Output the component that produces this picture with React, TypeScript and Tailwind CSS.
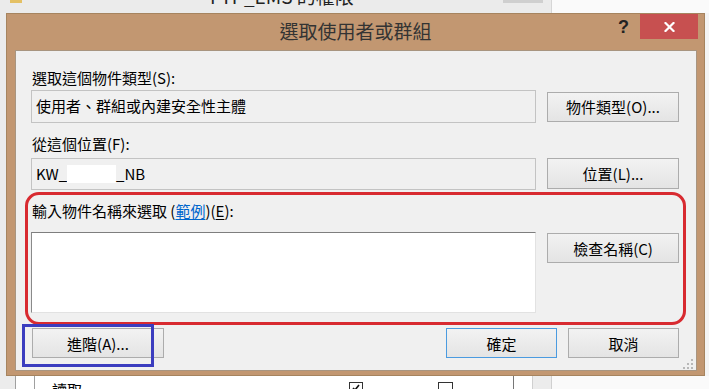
import React from "react";

const Btn = ({ children, w, h = "h-[30px]", extra = "" }: { children: React.ReactNode; w: string; h?: string; extra?: string }) => (
  <div
    className={`${w} ${h} ${extra} shrink-0 flex items-center justify-center border bg-linear-to-b from-[#f2f2f2] to-[#e4e4e4] text-[15px] text-black leading-none`}
  >
    {children}
  </div>
);

export default function App() {
  return (
    <div className="w-[709px] h-[389px] overflow-hidden relative flex flex-col bg-[#ebebeb] font-['Noto_Sans_CJK_TC','Noto_Sans',sans-serif]">
      {/* background window top strip */}
      <div className="h-[13px] shrink-0 flex overflow-hidden">
        <div className="w-[552px] flex items-start bg-[#ebebeb] border-r border-[#d6d6d6]">
          <div className="ml-[10px] w-[12px] h-[3px] bg-[#e4c064]" />
          <div className="ml-[188px] mt-[-14px] text-[19px] leading-[19px] text-[#222] whitespace-nowrap">FTP_EMS 的權限</div>
          <div className="ml-auto mr-[8px] w-[40px] h-[3px] bg-[#cfcfcf]" />
        </div>
        <div className="flex-1 bg-[#fafafa]" />
      </div>

      {/* middle row */}
      <div className="h-[363px] shrink-0 flex">
        <div className="w-[6px] bg-[#ebebeb]" />
        <div className="w-[699px] h-[363px] flex flex-col border border-[#a6845f] bg-[#c29771]">
          {/* title bar */}
          <div className="h-[36px] shrink-0 flex">
            <div className="w-[86px]" />
            <div className="flex-1 text-center text-[19px] leading-[22px] pt-[6px] text-[#333]">選取使用者或群組</div>
            <div className="w-[86px] flex items-start">
              <div className="w-[10px] mt-[4px] text-[18px] leading-[18px] font-bold text-[#222] font-['Liberation_Sans',sans-serif]">?</div>
              <div className="ml-[12px] w-[58px] h-[25px] bg-[#c75050] flex items-center justify-center">
                <svg width="11" height="10" viewBox="0 0 11 10">
                  <path d="M1.5 1 L9.5 9 M9.5 1 L1.5 9" stroke="#fff" strokeWidth="2.2" strokeLinecap="square" />
                </svg>
              </div>
            </div>
          </div>

          {/* content */}
          <div className="flex-1 ml-[8px] mr-[7px] mb-[4px] relative flex flex-col bg-[#f0f0f0] border border-[#a89580] pl-[15px] pr-[17px] text-black">
            <div className="mt-[18px] ml-[1px] h-[18px] text-[15px] leading-[18px]">選取這個物件類型(S):</div>
            <div className="mt-[3px] flex items-center gap-[11px]">
              <div className="w-[505px] h-[33px] border border-[#c3c3c3] bg-[#f0f0f0] flex items-center pl-[4px] text-[15px]">使用者、群組或內建安全性主體</div>
              <Btn w="w-[132px]" extra="border-[#acacac]">物件類型(O)...</Btn>
            </div>

            <div className="mt-[12px] ml-[1px] h-[18px] text-[15px] leading-[18px]">從這個位置(F):</div>
            <div className="mt-[5px] flex items-start gap-[11px]">
              <div className="w-[505px] h-[32px] border border-[#c3c3c3] bg-[#f0f0f0] flex items-center pl-[4px] text-[15px]">
                <span>KW_</span>
                <span className="inline-block w-[49px] h-[18px] bg-white" />
                <span>_NB</span>
              </div>
              <Btn w="w-[132px]" h="h-[31px]" extra="border-[#acacac]">位置(L)...</Btn>
            </div>

            <div className="mt-[12px] ml-[1px] h-[18px] text-[15px] leading-[18px]">
              輸入物件名稱來選取 (<span className="text-[#0066cc] underline underline-offset-2">範例</span>)(<span className="underline underline-offset-2">E</span>):
            </div>
            <div className="mt-[12px] flex items-start gap-[11px]">
              <div className="w-[505px] h-[81px] bg-white border border-t-[#7e7e7e] border-l-[#8a8a8a] border-r-[#e2e2e2] border-b-[#e2e2e2]" />
              <Btn w="w-[132px]" extra="mt-[1px] border-[#acacac]">檢查名稱(C)</Btn>
            </div>

            <div className="mt-[15px] flex">
              <Btn w="w-[132px]" extra="ml-[1px] border-[#acacac]">進階(A)...</Btn>
              <Btn w="w-[111px]" extra="ml-auto border-[#4b9be0]">確定</Btn>
              <Btn w="w-[111px]" extra="ml-[11px] border-[#acacac]">取消</Btn>
            </div>

            {/* size grip */}
            <svg className="absolute right-[3px] bottom-[1px]" width="10" height="10" viewBox="0 0 10 10">
              <rect x="8" y="0" width="2" height="2" fill="#b8b8b8" />
              <rect x="4" y="4" width="2" height="2" fill="#b8b8b8" />
              <rect x="8" y="4" width="2" height="2" fill="#b8b8b8" />
              <rect x="0" y="8" width="2" height="2" fill="#b8b8b8" />
              <rect x="4" y="8" width="2" height="2" fill="#b8b8b8" />
              <rect x="8" y="8" width="2" height="2" fill="#b8b8b8" />
            </svg>
          </div>
        </div>
        <div className="w-[4px] bg-[#f4f4f4]" />
      </div>

      {/* background window bottom strip */}
      <div className="h-[13px] shrink-0 flex overflow-hidden">
        <div className="w-[15px] bg-[#ececec]" />
        <div className="w-[20px] bg-white border-l border-r border-[#a0a0a0]" />
        <div className="w-[478px] bg-white flex items-start">
          <div className="ml-[17px] mt-[5px] text-[15px] leading-[18px] text-black">讀取</div>
          <div className="ml-[267px] mt-[6px] w-[14px] h-[14px] border border-[#333] bg-white flex items-start justify-center">
            <svg width="10" height="10" viewBox="0 0 10 10"><path d="M2 5 L4 7 L8 2" stroke="#111" strokeWidth="1.6" fill="none" /></svg>
          </div>
          <div className="ml-[75px] mt-[6px] w-[15px] h-[14px] border border-[#333] bg-white" />
        </div>
        <div className="w-[19px] bg-white border-l border-[#777]" />
        <div className="w-[20px] bg-[#ececec] border-l border-r border-[#d0d0d0]" />
        <div className="flex-1 bg-[#fafafa]" />
      </div>

      {/* annotations */}
      <div className="absolute left-[25px] top-[192px] w-[661px] h-[133px] border-[3px] border-[#d82a30] rounded-[14px] pointer-events-none" />
      <div className="absolute left-[22px] top-[324px] w-[132px] h-[43px] border-[3px] border-[#3b3dbf] pointer-events-none" />
    </div>
  );
}
